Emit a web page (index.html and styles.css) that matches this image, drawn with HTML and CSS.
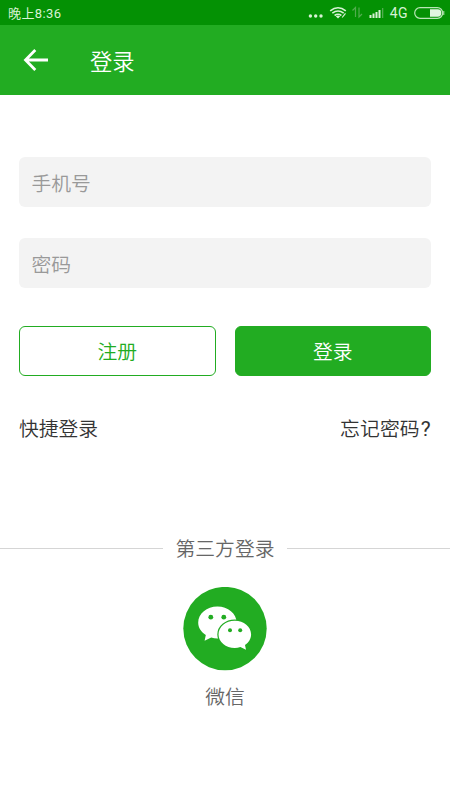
FILE: index.html
```html
<!DOCTYPE html>
<html lang="zh-CN">
<head>
<meta charset="utf-8">
<title>登录</title>
<link rel="stylesheet" href="styles.css">
</head>
<body>
<div class="status">
  <span class="time">晚上8:36</span>
  <svg class="signals" width="80" height="25" viewBox="0 0 80 25">
    <g fill="#d8f2d5"><circle cx="1.4" cy="16" r="1.7"/><circle cx="6.7" cy="16" r="1.7"/><circle cx="12" cy="16" r="1.7"/></g>
    <g fill="none" stroke="#d8f2d5" stroke-width="1.6">
      <path d="M21.2 10.8Q29 4.6 36.8 10.8M23.3 13.2Q29 8.8 34.7 13.2M25.6 15.5Q29 13 32.4 15.5"/>
      <path d="M33.2 17.5l3.3-4.2" stroke-width="1.2"/>
    </g>
    <path d="M26.8 16.2Q29 14.8 31.2 16.2L29 18.6z" fill="#d8f2d5"/>
    <path d="M43.5 10.5L46.5 7.5V17M50 7.5V17L53 14" fill="none" stroke="#52ad4f" stroke-width="1.2"/>
    <path d="M60.5 15h2v3h-2zM63.5 13.6h2V18h-2zM66.5 12h2v6h-2zM69.5 10h2v8h-2z" fill="#d8f2d5"/>
    <path d="M73 8h1.3v10H73z" fill="#52ad4f"/>
  </svg>
  <span class="network">4G</span>
  <svg class="battery" width="31" height="12" viewBox="0 0 31 12">
    <rect x=".7" y=".7" width="28" height="10.6" rx="5.3" fill="none" stroke="#b9e5b6" stroke-width="1.2"/>
    <path d="M16 2.3h7.7a3.7 3.7 0 0 1 0 7.4H16z" fill="#e2f5e0"/>
    <path d="M29.8 4v4" stroke="#b9e5b6"/>
  </svg>
</div>
<header class="bar">
  <svg class="back" width="26" height="24" viewBox="0 0 26 24">
    <path d="M12.3 2L2.5 12l9.8 10M3 12h22" fill="none" stroke="#fff" stroke-width="2.8"/>
  </svg>
  <h1>登录</h1>
</header>
<main>
  <form class="form">
    <input class="field" type="tel" placeholder="手机号">
    <input class="field" type="password" placeholder="密码">
    <div class="actions">
      <button class="button outline" type="button">注册</button>
      <button class="button" type="button">登录</button>
    </div>
    <div class="links"><span>快捷登录</span><span class="forgot">忘记密码<span class="mark">?</span></span></div>
  </form>
  <div class="divider"><span>第三方登录</span></div>
  <div class="wechat">
    <svg width="84" height="84" viewBox="0 0 84 84">
      <circle cx="42" cy="41.6" r="41.7" fill="#22ac22"/>
      <path d="M34.4 19.6C23.8 19.6 15.2 26.7 15.2 35.6c0 5.2 2.8 9.5 7.6 12.4L21.6 53.8l6.6-3.4c2 .7 4 1 6.2 1 10.6 0 19.2-7.1 19.2-15.9S45 19.6 34.4 19.6z" fill="#fff"/>
      <path d="M51.8 33.7c9 0 16.3 6.1 16.3 13.7 0 4.2-2.4 8-6.1 10.5l1 4.8-5.6-2.6c-1.8.6-3.7.9-5.6.9-9 0-16.3-6.1-16.3-13.6s7.3-13.7 16.3-13.7z" fill="#fff" stroke="#22ac22" stroke-width="2.4" paint-order="stroke"/>
      <g fill="#22ac22"><circle cx="27.8" cy="30.2" r="2.4"/><circle cx="40.8" cy="30.2" r="2.4"/><circle cx="47" cy="43.3" r="2"/><circle cx="57.2" cy="43.3" r="2"/></g>
    </svg>
    <span>微信</span>
  </div>
</main>
</body>
</html>
```
FILE: styles.css
```css
* { box-sizing: border-box; }
body {
  margin: 0;
  background: #fff;
  color: #333;
  font: 350 19.8px/30px Roboto, "Noto Sans CJK SC", sans-serif;
}
.status {
  height: 25px;
  padding: 0 5px 0 8px;
  display: flex;
  align-items: center;
  background: #049104;
  color: #d8f2d5;
  font-size: 13px;
  font-weight: 400;
  line-height: 25px;
}
.time { padding-top: 1px; letter-spacing: .4px; }
.signals { margin: 0 1.5px 0 auto; overflow: visible; }
.network { margin: 1px 6px 0 -1px; font-size: 14px; letter-spacing: .4px; }
.bar {
  height: 70px;
  padding-left: 23px;
  display: flex;
  align-items: center;
  background: #22ac22;
  color: #fff;
}
.bar h1 {
  margin: 0 0 0 41px;
  padding-top: 4px;
  font-size: 22.3px;
  font-weight: 350;
  line-height: 32px;
}
.form { padding: 62px 19px 0; }
.field {
  display: block;
  width: 100%;
  height: 50px;
  margin: 0 0 31px;
  padding: 4px 13px 0 12.5px;
  border: 0;
  border-radius: 6px;
  background: #f3f3f3;
  font: inherit;
}
.field::placeholder { color: #999; opacity: 1; }
.actions {
  display: grid;
  grid-template-columns: 1fr 1fr;
  gap: 19px;
  margin-top: 38px;
}
.button {
  height: 50px;
  padding: 4px 0 0;
  border: 1px solid #22ac22;
  border-radius: 6px;
  background: #22ac22;
  color: #fff;
  font: inherit;
}
.outline { background: #fff; color: #22ac22; }
.links {
  display: flex;
  justify-content: space-between;
  margin-top: 39px;
}
.forgot { letter-spacing: .2px; }
.mark { margin-left: 1px; font-size: 21px; font-weight: 400; line-height: 1; }
.divider {
  display: flex;
  align-items: center;
  gap: 13px;
  margin-top: 86px;
  color: #666;
}
.divider span { padding-top: 4px; }
.divider::before,
.divider::after {
  content: "";
  flex: 1;
  height: 1px;
  background: #d5d5d5;
}
.wechat {
  display: flex;
  flex-direction: column;
  align-items: center;
  gap: 12px;
  margin-top: 22px;
  color: #666;
}
```
